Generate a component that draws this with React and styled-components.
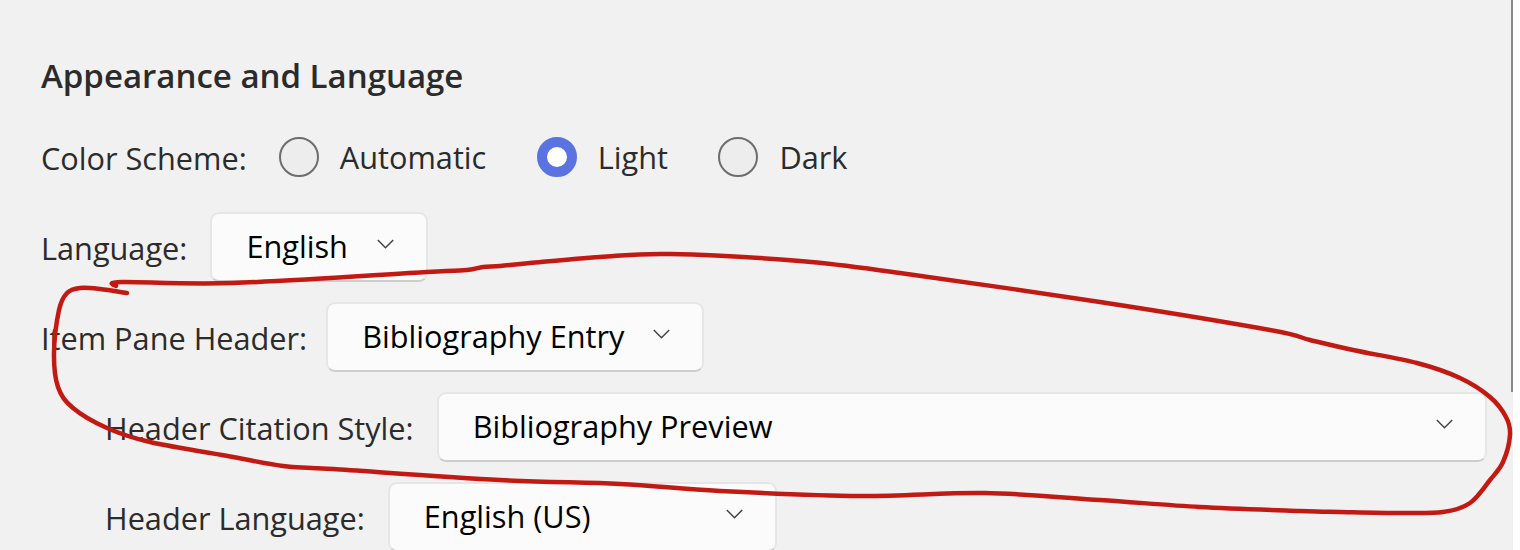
import React from 'react';
import styled, { createGlobalStyle } from 'styled-components';

const GlobalStyle = createGlobalStyle`
  html, body {
    margin: 0;
    padding: 0;
    background: #fff;
  }
`;

const Page = styled.div`
  position: relative;
  box-sizing: border-box;
  width: 1513px;
  height: 550px;
  overflow: hidden;
  padding: 55px 26px 0 41px;
  background: #f1f1f1;
  font-family: "Open Sans", "Noto Sans", sans-serif;
  font-size: 30.7px;
  color: #2b2b2b;
`;

const Heading = styled.h2`
  margin: 0 0 25px;
  font-size: 33px;
  line-height: 42px;
  font-weight: 600;
`;

const Rows = styled.div`
  display: flex;
  flex-direction: column;
  gap: 20px;
`;

const Row = styled.div`
  display: flex;
  align-items: center;
  height: 70px;
  padding-left: ${p => (p.$nested ? '64px' : '0')};
`;

const Label = styled.span`
  margin-right: ${p => p.$gap || 23}px;
  padding-top: 2px;
  white-space: nowrap;
`;

const RadioGroup = styled.div`
  display: flex;
  align-items: center;
  gap: 50.5px;
  margin-left: 9px;
`;

const RadioItem = styled.label`
  display: flex;
  align-items: center;
  gap: 21px;
`;

const RadioCircle = styled.span`
  box-sizing: border-box;
  width: 40px;
  height: 40px;
  border-radius: 50%;
  border: ${p => (p.$checked ? '10px solid #5a73e0' : '2.5px solid #6d6d6d')};
  background: ${p => (p.$checked ? '#fff' : '#ededed')};
`;

const Select = styled.div`
  box-sizing: border-box;
  display: flex;
  align-items: center;
  justify-content: space-between;
  flex: ${p => (p.$wide ? '1' : '0 0 auto')};
  width: ${p => (p.$wide ? 'auto' : `${p.$width}px`)};
  height: 70px;
  padding: 0 32px 2px 34px;
  background: #fbfbfb;
  border: 2px solid #e6e6e6;
  border-bottom-color: #cdcdcd;
  border-radius: 9px;
  color: #000;
`;

const ChevronIcon = styled.svg`
  margin-bottom: 4px;
`;

const Chevron = () => (
  <ChevronIcon width="17" height="10" viewBox="0 0 17 10" fill="none">
    <path d="M0.8 1l7.7 7.7L16.2 1" stroke="#444" strokeWidth="1.5" />
  </ChevronIcon>
);

const Scrollbar = styled.div`
  position: absolute;
  top: 0;
  right: 0;
  width: 2px;
  height: 392px;
  background: #8a8a8a;
`;

const InkLayer = styled.svg`
  position: absolute;
  top: 0;
  left: 0;
  pointer-events: none;
`;

const inkPoints = [
  [127, 293], [100, 289], [80, 288], [67, 293], [59, 310], [54, 353], [58, 387], [73, 408],
  [107, 428], [150, 442], [233, 457], [283, 466], [333, 469], [500, 480], [620, 484], [720, 491],
  [860, 496], [985, 493], [1100, 500], [1200, 507], [1300, 511], [1340, 512], [1400, 513], [1443, 512],
  [1470, 503], [1490, 480], [1503, 462], [1510, 435], [1506, 417], [1490, 397], [1460, 378], [1417, 363],
  [1353, 350], [1310, 340], [1270, 330], [1100, 302], [900, 273], [800, 261], [670, 254], [600, 257],
  [530, 263], [500, 266], [483, 267], [467, 270], [427, 272], [233, 283], [122, 282], [116, 286],
];

// catmull-rom through the traced points
const inkPath = inkPoints.reduce((d, p, i, a) => {
  if (i === 0) return `M${p[0]} ${p[1]}`;
  const p0 = a[i - 2] || a[i - 1];
  const p1 = a[i - 1];
  const p3 = a[i + 1] || p;
  const c1 = [p1[0] + (p[0] - p0[0]) / 6, p1[1] + (p[1] - p0[1]) / 6];
  const c2 = [p[0] - (p3[0] - p1[0]) / 6, p[1] - (p3[1] - p1[1]) / 6];
  return `${d} C${c1[0]} ${c1[1]} ${c2[0]} ${c2[1]} ${p[0]} ${p[1]}`;
}, '');

export default () => (
  <Page>
    <GlobalStyle />
    <Heading>Appearance and Language</Heading>
    <Rows>
      <Row>
        <Label>Color Scheme:</Label>
        <RadioGroup>
          <RadioItem><RadioCircle />Automatic</RadioItem>
          <RadioItem><RadioCircle $checked />Light</RadioItem>
          <RadioItem><RadioCircle />Dark</RadioItem>
        </RadioGroup>
      </Row>
      <Row>
        <Label>Language:</Label>
        <Select $width={218}>English <Chevron /></Select>
      </Row>
      <Row>
        <Label $gap={19}>Item Pane Header:</Label>
        <Select $width={378}>Bibliography Entry <Chevron /></Select>
      </Row>
      <Row $nested>
        <Label>Header Citation Style:</Label>
        <Select $wide>Bibliography Preview <Chevron /></Select>
      </Row>
      <Row $nested>
        <Label>Header Language:</Label>
        <Select $width={389}>English (US) <Chevron /></Select>
      </Row>
    </Rows>
    <Scrollbar />
    <InkLayer width="1513" height="550" viewBox="0 0 1513 550" fill="none">
      <path d={inkPath} stroke="#c21a12" strokeWidth="4.5" strokeLinecap="round" strokeLinejoin="round" />
    </InkLayer>
  </Page>
);
